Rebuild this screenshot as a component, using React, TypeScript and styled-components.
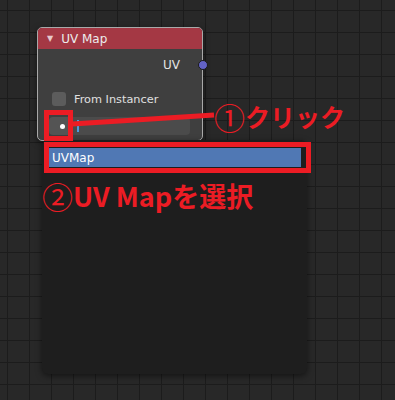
import React from "react";
import styled, { createGlobalStyle } from "styled-components";

const Global = createGlobalStyle`
  html, body { margin: 0; padding: 0; background: #282828; }
  body { font-family: "DejaVu Sans", sans-serif; }
`;

const Canvas = styled.div`
  position: relative;
  width: 395px;
  height: 400px;
  overflow: hidden;
  background-color: #282828;
  background-image:
    linear-gradient(to right, #1c1c1c 1px, transparent 1px),
    linear-gradient(to bottom, #1c1c1c 1px, transparent 1px);
  background-size: 22px 22px;
  background-position: 7px 10px;
`;

const Node = styled.div`
  position: absolute;
  left: 37px;
  top: 27px;
  width: 166px;
  box-sizing: border-box;
  border: 1px solid #a9a9a9;
  border-radius: 5px;
  background: #3f3f3f;
  box-shadow: 0 2px 6px rgba(0, 0, 0, 0.5);
`;

const Header = styled.div`
  display: flex;
  align-items: center;
  gap: 8px;
  height: 21px;
  padding-left: 9px;
  background: #a43844;
  border-radius: 4px 4px 0 0;
  color: #ececec;
  font-size: 12px;
`;

const Arrow = styled.span`
  font-size: 8px;
  color: #e6c8cc;
  line-height: 1;
`;

const Body = styled.div`
  display: flex;
  flex-direction: column;
  padding: 6px 12px 5px 11px;
`;

const OutputRow = styled.div`
  position: relative;
  display: flex;
  justify-content: flex-end;
  align-items: center;
  height: 20px;
  padding-right: 10px;
  color: #e4e4e4;
  font-size: 12px;
`;

const Socket = styled.span`
  position: absolute;
  right: -18px;
  top: 5px;
  width: 8px;
  height: 8px;
  border-radius: 50%;
  background: #6363c7;
  border: 1px solid #1a1a1a;
`;

const CheckRow = styled.div`
  display: flex;
  align-items: center;
  gap: 8px;
  height: 20px;
  margin-top: 14px;
  padding-left: 3px;
  color: #e0e0e0;
  font-size: 11.3px;
`;

const Check = styled.span`
  width: 14px;
  height: 14px;
  border-radius: 3px;
  background: #5c5c5c;
`;

const FieldRow = styled.div`
  display: flex;
  height: 18px;
  margin-top: 8px;
  border-radius: 4px;
  overflow: hidden;
`;

const DotButton = styled.div`
  display: flex;
  align-items: center;
  justify-content: center;
  width: 20px;
  background: #545454;
  &::after {
    content: "";
    width: 5px;
    height: 5px;
    border-radius: 50%;
    background: #ffffff;
    margin-left: 6px;
  }
`;

const Field = styled.div`
  flex: 1;
  display: flex;
  align-items: center;
  padding-left: 8px;
  background: #4b4b4b;
`;

const Cursor = styled.span`
  width: 2px;
  height: 12px;
  background: #4c9be0;
`;

const Popup = styled.div`
  position: absolute;
  left: 42px;
  top: 140px;
  width: 265px;
  height: 234px;
  box-sizing: border-box;
  padding: 8px 6px 8px 7px;
  background: #1e1e1e;
  border-radius: 6px;
  box-shadow: 0 2px 6px rgba(0, 0, 0, 0.5);
`;

const Item = styled.div`
  display: flex;
  align-items: center;
  height: 19px;
  padding-left: 3px;
  background: #5078b4;
  color: #ffffff;
  font-size: 12px;
`;

const RedBox = styled.div<{ $l: number; $t: number; $w: number; $h: number }>`
  position: absolute;
  left: ${(p) => p.$l}px;
  top: ${(p) => p.$t}px;
  width: ${(p) => p.$w}px;
  height: ${(p) => p.$h}px;
  box-sizing: border-box;
  border: 5px solid #ec1c24;
`;

const Line = styled.svg`
  position: absolute;
  left: 0;
  top: 0;
  pointer-events: none;
`;

const Note = styled.div<{ $l: number; $t: number; $size: number }>`
  position: absolute;
  left: ${(p) => p.$l}px;
  top: ${(p) => p.$t}px;
  display: flex;
  align-items: center;
  color: #ec1c24;
  font-family: "Noto Sans CJK JP", "Noto Sans", sans-serif;
  font-weight: 700;
  font-size: ${(p) => p.$size}px;
  line-height: 1;
  white-space: nowrap;
`;

const Circled = styled.span`
  font-weight: 400;
  font-size: 31px;
`;

export default function App() {
  return (
    <Canvas>
      <Global />
      <Node>
        <Header>
          <Arrow>▼</Arrow>
          <span>UV Map</span>
        </Header>
        <Body>
          <OutputRow>
            UV
            <Socket />
          </OutputRow>
          <CheckRow>
            <Check />
            <span>From Instancer</span>
          </CheckRow>
          <FieldRow>
            <DotButton />
            <Field>
              <Cursor />
            </Field>
          </FieldRow>
        </Body>
      </Node>
      <Popup>
        <Item>UVMap</Item>
      </Popup>
      <RedBox $l={44} $t={110} $w={29} $h={31} />
      <RedBox $l={44} $t={142} $w={267} $h={31} />
      <Line width="395" height="400">
        <line x1="72" y1="124" x2="214" y2="115" stroke="#ec1c24" strokeWidth="5" />
      </Line>
      <Note $l={214} $t={101} $size={25}>
        <Circled>①</Circled>クリック
      </Note>
      <Note $l={42} $t={180} $size={27}>
        <Circled>②</Circled>UV Mapを選択
      </Note>
    </Canvas>
  );
}
